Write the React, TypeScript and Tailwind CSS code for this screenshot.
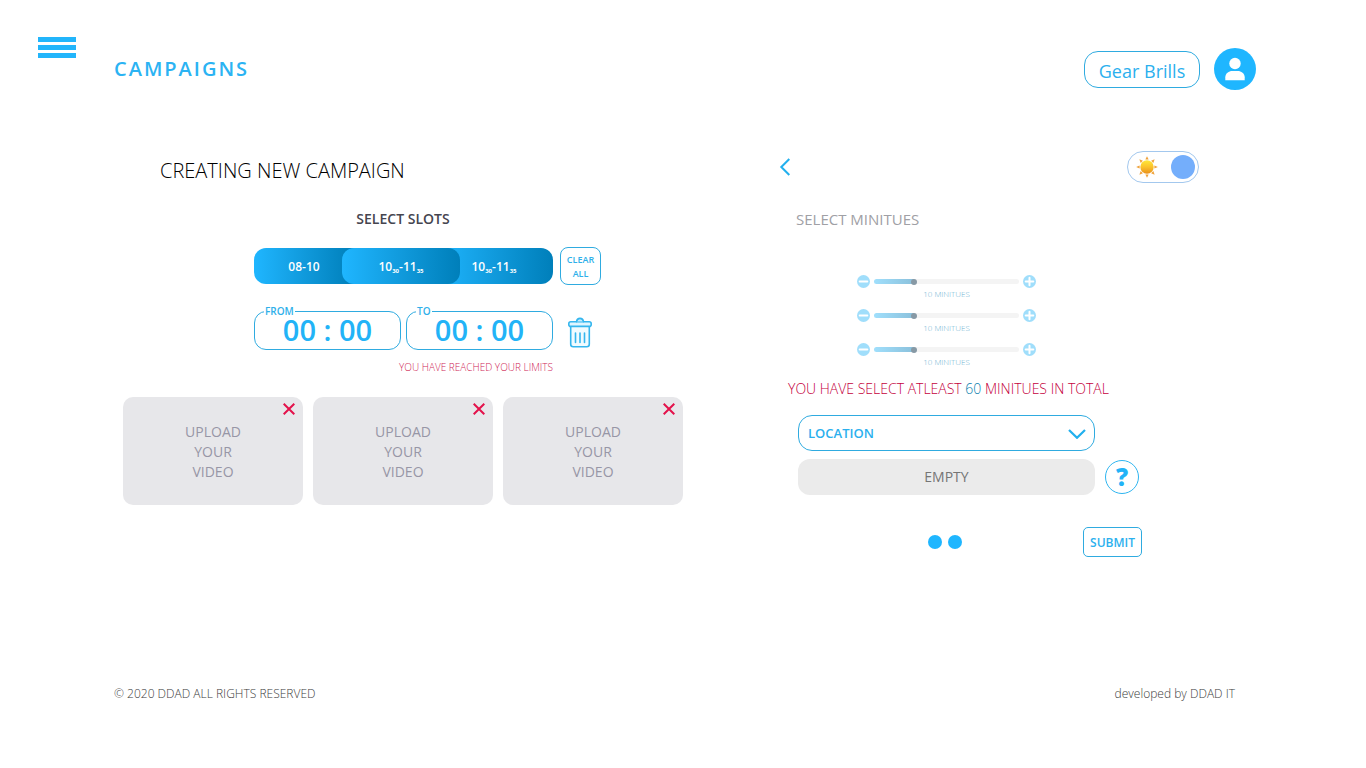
import { useState, type ReactNode } from "react";

function TimeSlot({ children, className }: { children: ReactNode; className: string }) {
  return (
    <button
      type="button"
      className={`h-full bg-linear-to-r from-[#1fb6ff] to-[#007fba] pt-0.5 text-xs font-semibold text-white ${className}`}
    >
      {children}
    </button>
  );
}

function SlotRange() {
  return (
    <span>
      10<sub className="text-[6px] font-bold">30</sub>-11<sub className="text-[6px] font-bold">35</sub>
    </span>
  );
}

function TimeField({ id, label }: { id: string; label: string }) {
  const [value, setValue] = useState("00 : 00");
  return (
    <div className="relative h-[39px] min-w-0 flex-1">
      <label
        htmlFor={id}
        className="absolute -top-1.5 left-2.5 bg-white px-px text-[10px] leading-3 font-semibold text-[#2fb0ea]"
      >
        {label}
      </label>
      <input
        id={id}
        value={value}
        onChange={(e) => setValue(e.target.value)}
        className="h-full w-full rounded-xl border border-[#2fabe0] pb-0.5 text-center text-[29px] font-semibold text-[#22b3f7] outline-none"
      />
    </div>
  );
}

function UploadCard({ index }: { index: number }) {
  return (
    <div className="relative">
      <button
        type="button"
        className="flex h-[108px] w-full flex-col items-center justify-center rounded-[10px] bg-[#e7e7ea] pt-0.5 text-sm leading-5 text-[#9796a6]"
      >
        <span>UPLOAD</span>
        <span>YOUR</span>
        <span>VIDEO</span>
      </button>
      <button type="button" aria-label={`Remove video ${index}`} className="absolute top-1.5 right-2">
        <svg className="size-3" viewBox="0 0 12 12" fill="none" stroke="#e3124b" strokeWidth="2">
          <path d="M0.7 0.7 11.3 11.3M11.3 0.7 0.7 11.3" />
        </svg>
      </button>
    </div>
  );
}

function RoundSign({ plus }: { plus?: boolean }) {
  return (
    <svg className="size-[13px]" viewBox="0 0 13 13">
      <circle cx="6.5" cy="6.5" r="6.5" fill="#a0defb" />
      <path
        d={plus ? "M2.7 6.5h7.6M6.5 2.7v7.6" : "M2.7 6.5h7.6"}
        stroke="#fff"
        strokeWidth="2"
        strokeLinecap="round"
      />
    </svg>
  );
}

function MinuteSlider({ id }: { id: string }) {
  const [minutes, setMinutes] = useState(10);
  const max = 38;
  const fill = (minutes / max) * 100 + 1;
  return (
    <div>
      <div className="flex h-[13px] items-center gap-1">
        <button type="button" aria-label="Less" onClick={() => setMinutes(Math.max(0, minutes - 1))}>
          <RoundSign />
        </button>
        <input
          id={id}
          type="range"
          min={0}
          max={max}
          value={minutes}
          onChange={(e) => setMinutes(Number(e.target.value))}
          style={{
            backgroundImage: `linear-gradient(90deg, #a0dffc 0%, #8bc1dc ${fill}%, #f4f4f4 ${fill}%)`,
          }}
          className="h-[5px] min-w-0 flex-1 appearance-none rounded-full outline-none [&::-webkit-slider-thumb]:size-[6px] [&::-webkit-slider-thumb]:appearance-none [&::-webkit-slider-thumb]:rounded-full [&::-webkit-slider-thumb]:bg-[#8799a5]"
        />
        <button type="button" aria-label="More" onClick={() => setMinutes(Math.min(max, minutes + 1))}>
          <RoundSign plus />
        </button>
      </div>
      <label htmlFor={id} className="block text-center text-[8px] leading-3 font-light text-[#6fb3d2]">
        {minutes} MINITUES
      </label>
    </div>
  );
}

function Sun() {
  const rays = [0, 45, 90, 135, 180, 225, 270, 315];
  return (
    <svg className="size-[22px]" viewBox="0 0 22 22">
      <defs>
        <linearGradient id="sun" x1="0" y1="0" x2="0" y2="1">
          <stop offset="0" stopColor="#ffe838" />
          <stop offset="0.5" stopColor="#fbc22a" />
          <stop offset="1" stopColor="#e8901c" />
        </linearGradient>
      </defs>
      {rays.map((angle) => (
        <path key={angle} d="M9.4 3.600 11 0.2l1.600 3.400z" fill="#f0a23a" transform={`rotate(${angle} 11 11)`} />
      ))}
      <circle cx="11" cy="11" r="6.700" fill="url(#sun)" />
    </svg>
  );
}

export default function App() {
  return (
    <div className="flex flex-col bg-white font-['Open_Sans','Noto_Sans',sans-serif] text-[#1fb6ff]">
      <header className="flex items-start justify-between pt-9 pr-[110px] pl-[38px]">
        <div className="flex items-start gap-[38px]">
          <button type="button" aria-label="Menu">
            <svg className="h-[23px] w-[38px]" viewBox="0 0 38 23" fill="#22b5fb">
              <path d="M0 1h38v5H0zM0 9h38v5H0zM0 17h38v5H0z" />
            </svg>
          </button>
          <h1 className="mt-[19px] text-xl leading-7 font-semibold tracking-widest text-[#2bb3f3]">CAMPAIGNS</h1>
        </div>
        <div className="mt-3 flex items-center gap-3.5">
          <button
            type="button"
            className="h-[37px] w-[116px] rounded-[14px] border border-[#2fabe0] pt-1 text-lg whitespace-nowrap text-[#2bb0ee]"
          >
            Gear Brills
          </button>
          <button type="button" aria-label="Profile">
            <svg className="size-[42px]" viewBox="0 0 42 42">
              <circle cx="21" cy="21" r="21" fill="#1fb6ff" />
              <circle cx="21" cy="15.5" r="5.7" fill="#fff" />
              <path d="M11.3 32.300v-3c0-4 3.5-6.300 7-6.300h5.4c3.500 0 7 2.300 7 6.300v3z" fill="#fff" />
            </svg>
          </button>
        </div>
      </header>

      <main className="mt-[61px] grid grid-cols-[4fr_3fr] gap-24 pr-[167px] pl-[123px]">
        <section>
          <h2 className="mt-1 ml-[37px] text-xl leading-8 font-light text-black">CREATING NEW CAMPAIGN</h2>
          <h3 className="mt-5 text-center text-sm leading-6 font-semibold text-[#45454f]">SELECT SLOTS</h3>

          <div className="mt-4 ml-[131px] w-[347px]">
            <div className="flex items-center gap-[7px]">
              <div className="flex h-9 flex-1">
                <TimeSlot className="-mr-3 w-[100px] rounded-l-xl">08-10</TimeSlot>
                <TimeSlot className="relative z-10 w-[118px] rounded-xl">
                  <SlotRange />
                </TimeSlot>
                <TimeSlot className="-ml-[25px] w-[118px] rounded-r-xl">
                  <SlotRange />
                </TimeSlot>
              </div>
              <button
                type="button"
                className="h-[38px] w-[41px] rounded-lg border border-[#2fabe0] pt-px text-[9px] leading-3.5 font-semibold text-[#2fb0ea]"
              >
                CLEAR ALL
              </button>
            </div>
            <div className="mt-[26px] flex items-center">
              <div className="flex w-[299px] gap-[5px]">
                <TimeField id="from" label="FROM" />
                <TimeField id="to" label="TO" />
              </div>
              <button type="button" aria-label="Delete slot" className="mt-1 ml-[15px]">
                <svg
                  className="h-[31px] w-6"
                  viewBox="0 0 24 31"
                  fill="none"
                  stroke="#35b6ee"
                  strokeWidth="1.6"
                  strokeLinecap="round"
                >
                  <path d="M2.700 9v18.200c0 1.500 1 2.500 2.500 2.500h13.600c1.500 0 2.500-1 2.500-2.500V9" fill="#f0fbff" />
                  <rect x="0.8" y="4.800" width="22.400" height="4.600" rx="2" fill="#dff5ff" />
                  <path d="M8.500 4.600C8.800 2.400 10 1.400 12 1.400s3.200 1 3.500 3.200" fill="#c4edff" />
                  <path d="M7.500 16v9.500M12 16v9.500M16.500 16v9.500" />
                </svg>
              </button>
            </div>
            <p className="mt-[9px] w-[299px] text-right text-[10px] leading-4 font-light text-[#cf1f58]">
              YOU HAVE REACHED YOUR LIMITS
            </p>
          </div>

          <div className="mt-[22px] grid grid-cols-3 gap-2.5">
            <UploadCard index={1} />
            <UploadCard index={2} />
            <UploadCard index={3} />
          </div>
        </section>

        <section>
          <div className="flex h-8 items-center justify-between">
            <button type="button" aria-label="Back">
              <svg className="h-[18px] w-3" viewBox="0 0 12 18" fill="none" stroke="#22b0ee" strokeWidth="2">
                <path d="M10.300 1 2.300 9l8 8" />
              </svg>
            </button>
            <button
              type="button"
              role="switch"
              aria-checked="true"
              aria-label="Light theme"
              className="flex h-8 w-[72px] items-center justify-between rounded-full border border-[#a3c8ee] pr-[3px] pl-2"
            >
              <Sun />
              <span className="size-6 rounded-full bg-[#74aefb]" />
            </button>
          </div>
          <h3 className="mt-6 ml-[17px] text-[15px] leading-6 text-[#a0a0a5]">SELECT MINITUES</h3>

          <div className="mt-11 ml-[78px] flex w-[179px] flex-col gap-[9px]">
            <MinuteSlider id="slot-1" />
            <MinuteSlider id="slot-2" />
            <MinuteSlider id="slot-3" />
          </div>

          <p className="mt-[11px] ml-[9px] text-sm leading-5 font-light whitespace-nowrap text-[#c4003c]">
            YOU HAVE SELECT ATLEAST <span className="text-[#0b7fae]">60</span> MINITUES IN TOTAL
          </p>

          <div className="mt-4 ml-[19px] w-[344px]">
            <div className="relative w-[297px]">
              <select
                aria-label="Location"
                className="h-9 w-full appearance-none rounded-[14px] border border-[#2fabe0] bg-white px-[9px] pt-0.5 text-[13px] font-semibold text-[#2bb0ee] outline-none"
              >
                <option>LOCATION</option>
              </select>
              <svg
                className="pointer-events-none absolute top-3.5 right-[9px] h-2.5 w-[18px]"
                viewBox="0 0 18 10"
                fill="none"
                stroke="#22b0ee"
                strokeWidth="2.200"
              >
                <path d="M1 1l8 7.800L17 1" />
              </svg>
            </div>
            <div className="mt-2 flex items-center gap-2.5">
              <div className="flex h-9 w-[297px] items-center justify-center rounded-xl bg-[#ebebeb] text-sm text-[#757575]">
                EMPTY
              </div>
              <button
                type="button"
                aria-label="Help"
                className="size-[34px] rounded-full border border-[#2fb5f0] text-2xl leading-8 font-extrabold text-[#22b3f7]"
              >
                ?
              </button>
            </div>
            <div className="mt-8 flex items-center justify-between">
              <div className="ml-[130px] flex gap-1.5">
                <button type="button" aria-label="Page 1" className="size-3.5 rounded-full bg-[#1fb6ff]" />
                <button type="button" aria-label="Page 2" className="size-3.5 rounded-full bg-[#1fb6ff]" />
              </div>
              <button
                type="submit"
                className="h-[30px] w-[59px] rounded-[5px] border border-[#2fabe0] pt-0.5 text-xs font-semibold text-[#2bb0ee]"
              >
                SUBMIT
              </button>
            </div>
          </div>
        </section>
      </main>

      <footer className="mt-[127px] flex justify-between pr-[131px] pb-16 pl-[114px] text-xs leading-5 font-light text-[#3c3c3c]">
        <span>© 2020 DDAD ALL RIGHTS RESERVED</span>
        <span>developed by DDAD IT</span>
      </footer>
    </div>
  );
}
